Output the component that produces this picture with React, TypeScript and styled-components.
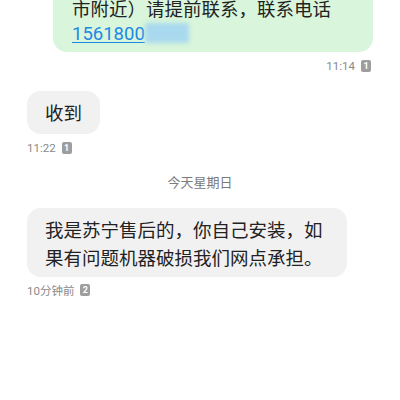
import { createGlobalStyle, styled } from "styled-components";

const GlobalStyle = createGlobalStyle`
    html, body {
        margin: 0;
        padding: 0;
        background: #ffffff;
    }
    body {
        font-family: Roboto, "Noto Sans CJK SC", sans-serif;
    }
`

type RowPropsType = {
    out?: boolean,
    top?: string
}

type BubblePropsType = {
    out?: boolean,
    pad?: string
}

type MetaPropsType = {
    top?: string,
    right?: string
}

const Page = styled.div`
    width: 400px;
    height: 400px;
    overflow: hidden;
    background: #ffffff;
`

const List = styled.div`
    display: flex;
    flex-direction: column;
    padding: 0 27px;
    margin-top: -2px;
`

const Row = styled.div<RowPropsType>`
    display: flex;
    flex-direction: column;
    align-items: ${props => props.out ? "flex-end" : "flex-start"};
    margin-top: ${props => props.top || "0"};
`

const Bubble = styled.div<BubblePropsType>`
    box-sizing: border-box;
    max-width: 320px;
    padding: ${props => props.pad || "9px 18px 4px 18px"};
    border-radius: 14px;
    background: ${props => props.out ? "#d9f5db" : "#f1f1f1"};
    color: #222222;
    font-size: 18.5px;
    line-height: 28px;
    word-break: break-all;
`

const OutBubble = styled(Bubble)`
    width: 320px;
    line-height: 24px;
    border-top-left-radius: 0;
    border-top-right-radius: 0;
`

const Phone = styled.span`
    color: #1e88e5;
    text-decoration: underline;
    text-underline-offset: 2px;
`

const Blur = styled.span`
    display: inline-block;
    width: 44px;
    height: 20px;
    vertical-align: -3px;
    background: #a9d9ee;
    filter: blur(2px);
    border-radius: 2px;
`

const Meta = styled.div<MetaPropsType>`
    display: flex;
    align-items: center;
    gap: 6px;
    height: 14px;
    margin-top: ${props => props.top || "7px"};
    margin-right: ${props => props.right || "0"};
    color: #8a8a8a;
    font-size: 11.5px;
`

const Badge = styled.span`
    display: inline-flex;
    align-items: center;
    justify-content: center;
    width: 10px;
    height: 12px;
    border-radius: 2px;
    background: #9e9e9e;
    color: #ffffff;
    font-size: 9px;
    font-weight: 700;
`

const DateLine = styled.div`
    margin: 19px 0 16px 0;
    text-align: center;
    color: #7a7a7a;
    font-size: 13px;
    line-height: 18px;
`

export default function App() {
    return (
        <Page>
            <GlobalStyle />
            <List>
                <Row out>
                    <OutBubble out pad="0 18px 6px 19px">
                        市附近）请提前联系，联系电话<br />
                        <Phone>1561800</Phone><Blur />
                    </OutBubble>
                    <Meta right="2px">
                        <span>11:14</span>
                        <Badge>1</Badge>
                    </Meta>
                </Row>
                <Row top="18px">
                    <Bubble pad="9px 18px 6px 18px">收到</Bubble>
                    <Meta>
                        <span>11:22</span>
                        <Badge>1</Badge>
                    </Meta>
                </Row>
                <DateLine>今天星期日</DateLine>
                <Row>
                    <Bubble>我是苏宁售后的，你自己安装，如果有问题机器破损我们网点承担。</Bubble>
                    <Meta top="6px">
                        <span>10分钟前</span>
                        <Badge>2</Badge>
                    </Meta>
                </Row>
            </List>
        </Page>
    )
}
